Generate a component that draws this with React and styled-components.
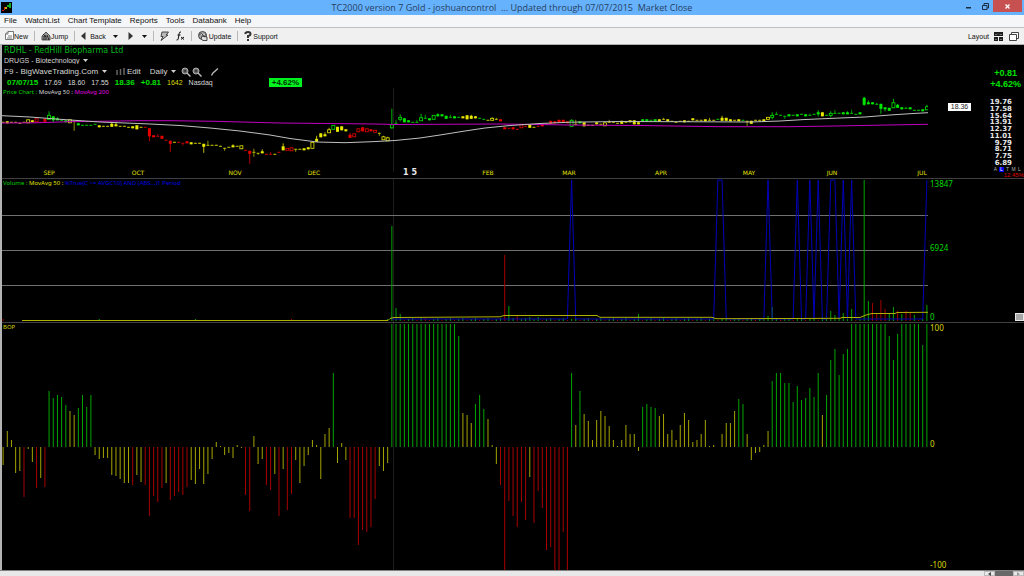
import React from "react";
import styled, { createGlobalStyle } from "styled-components";

const GlobalStyle = createGlobalStyle`
  * {
    box-sizing: border-box;
  }
  body {
    margin: 0;
    background-color: #000;
    font-family: "Liberation Sans", Arial, sans-serif;
    font-size: 8px;
  }
  button, select {
    font: inherit;
    color: inherit;
    margin: 0;
    padding: 0;
    border: 0 none;
    background-color: transparent;
    cursor: pointer;
  }
`;

const GREEN = "#00a400";
const YELLOW = "#a4a400";
const RED = "#a80000";

const Window = styled.div`
  height: 100vh;
  display: flex;
  flex-direction: column;
  overflow: hidden;
`;

const TitleBar = styled.header`
  height: 15px;
  display: grid;
  grid-template-columns: 64px 1fr 64px;
  background-color: #66b2fc;
`;

const AppIcon = styled.svg`
  width: 11px;
  height: 11px;
  margin: 2px 1px;
`;

const Title = styled.h1`
  margin: 0;
  font-family: "Open Sans", sans-serif;
  font-size: 9px;
  font-weight: 400;
  line-height: 15px;
  text-align: center;
  white-space: pre;
  color: #27405c;
`;

const WindowButtons = styled.div`
  display: flex;
  justify-content: flex-end;
  padding-right: 2px;
`;

const WindowButton = styled.button`
  width: ${props => (props.$close ? "29px" : "16px")};
  height: 12px;
  background-color: ${props => (props.$close ? "#c75050" : "transparent")};
  display: flex;
  align-items: center;
  justify-content: center;
`;

const MenuBar = styled.nav`
  height: 13px;
  display: flex;
  gap: 8px;
  padding-left: 4px;
  background-color: #f5f6f8;
  border-bottom: 1px solid #c0c0c0;
  line-height: 12px;
  color: #111;
`;

const MenuItem = styled.button`
  line-height: 12px;
`;

const ToolBar = styled.div`
  height: 17px;
  display: flex;
  align-items: center;
  padding: 0 5px;
  background-color: #f0f0f0;
  border-bottom: 1px solid #b0b0b0;
  font-size: 7px;
  color: #111;
`;

const Tool = styled.button`
  display: flex;
  align-items: center;
  height: 14px;
  gap: ${props => props.$gap || 0}px;
  margin-right: ${props => props.$after || 0}px;
`;

const Divider = styled.span`
  width: 1px;
  height: 10px;
  margin: 0 6px;
  background-color: #b8b8b8;
`;

const Spacer = styled.span`
  flex: 1;
`;

const Charts = styled.main`
  flex: 1;
  min-height: 0;
  display: grid;
  grid-template-rows: 43px 91fr 144fr 247fr;
  border-left: 2px solid #b4b4b4;
  background-color: #000;
`;

const Info = styled.section`
  display: flex;
  justify-content: space-between;
  color: #d8d8d8;
  white-space: nowrap;
`;

const InfoRow = styled.div`
  height: ${props => (props.$first ? 10 : 11)}px;
  display: flex;
  align-items: center;
  padding-left: 2px;
  gap: ${props => props.$gap || 0}px;
`;

const Company = styled.h2`
  margin: 0;
  font-size: 8px;
  font-weight: 400;
  font-family: "DejaVu Sans", sans-serif;
  color: #00b81c;
`;

const Picker = styled.label`
  display: flex;
  align-items: center;
  gap: 3px;
  font-size: ${props => props.$size || 8}px;
`;

const PickerSelect = styled.select`
  appearance: none;
`;

const ChartTools = styled.div`
  display: flex;
  gap: 1px;
  margin-left: -4px;
`;

const Value = styled.span`
  color: ${props => props.$color || "#d8d8d8"};
`;

const Quote = styled(InfoRow)`
  padding-left: 5px;
  gap: 6px;
  font-size: 7px;
`;

const Strong = styled.strong`
  font-size: 8px;
  color: #00e000;
`;

const PercentBadge = styled.span`
  margin-left: 50px;
  padding: 0 3px;
  height: 9px;
  line-height: 9px;
  font-size: 8px;
  font-weight: 700;
  background-color: #00f020;
  color: #003000;
`;

const Change = styled.div`
  padding: 23px 3px 0 0;
  font-size: 9px;
  font-weight: 700;
  line-height: 11px;
  text-align: center;
  color: #00e000;
`;

const Panel = styled.section`
  position: relative;
  min-height: 0;
  display: grid;
  grid-template-columns: 1fr 96px;
  border-bottom: ${props => (props.$last ? "0 none" : "1px solid #404040")};
`;

const Plot = styled.svg`
  display: block;
  width: 100%;
  height: 100%;
  min-height: 0;
`;

const PlotArea = styled.div`
  position: relative;
  min-height: 0;
  overflow: hidden;
`;

const Legend = styled.div`
  position: absolute;
  top: 0;
  left: 1px;
  font-family: "Noto Sans", sans-serif;
  font-size: 6px;
  line-height: 9px;
  white-space: pre;
`;

const Month = styled.span`
  position: absolute;
  bottom: 1px;
  transform: translateX(-50%);
  font-family: "DejaVu Sans", sans-serif;
  font-size: ${props => (props.$year ? 8 : 6)}px;
  font-weight: ${props => (props.$year ? 700 : 400)};
  line-height: 8px;
  white-space: pre;
  color: ${props => (props.$year ? "#e8e8e8" : "#e0e000")};
`;

const Axis = styled.div`
  position: relative;
  display: flex;
  flex-direction: column;
  justify-content: space-between;
  padding: 1px 0 1px 2px;
  font-family: "Noto Sans", sans-serif;
  font-size: 8px;
  line-height: 8px;
  color: ${props => props.$color};
`;

const MiddleLabel = styled.span`
  padding-bottom: 6px;
`;

const PriceAxis = styled(Axis)`
  justify-content: flex-start;
  padding: 11px 0 0;
`;

const PriceScale = styled.ol`
  height: 67px;
  margin: 0;
  padding: 0 12px 0 0;
  list-style: none;
  display: flex;
  flex-direction: column;
  justify-content: space-between;
  text-align: right;
  font-family: "DejaVu Sans", sans-serif;
  font-size: 7px;
  line-height: 6px;
  font-weight: 700;
  color: #e8e8e8;
`;

const LastPrice = styled.span`
  position: absolute;
  top: 15px;
  left: 20px;
  width: 23px;
  height: 8px;
  background-color: #fff;
  color: #222;
  font-family: "Liberation Sans", sans-serif;
  font-size: 7px;
  line-height: 8px;
  text-align: center;
`;

const ScaleModes = styled.div`
  display: flex;
  justify-content: flex-end;
  gap: 1px;
  padding: 1px 2px 0 0;
  font-family: "Liberation Sans", sans-serif;
  font-size: 5px;
  color: #b0b0b0;
`;

const Mode = styled.button`
  width: 5px;
  height: 5px;
  line-height: 5px;
  color: ${props => (props.$active ? "#fff" : "inherit")};
  background-color: ${props => (props.$active ? "#0000f0" : "transparent")};
`;

const Range = styled.div`
  line-height: 6px;
  font-family: "Liberation Sans", sans-serif;
  font-size: 6px;
  text-align: right;
  color: #e00000;
`;

const Handle = styled.button`
  position: absolute;
  right: 0;
  bottom: 1px;
  width: 9px;
  height: 8px;
  background-color: #a8a8a8;
  border: 1px solid #e8e8e8;
`;

const ScrollBar = styled.footer`
  height: 6px;
  display: flex;
  justify-content: flex-end;
  background-color: #e8e8e8;
  border-top: 1px solid #808080;
`;

const ScrollButton = styled.button`
  width: 11px;
  height: 5px;
  border: 1px solid #bbb;
  display: flex;
  align-items: center;
  justify-content: center;
`;

const Thumb = styled.span`
  width: 18px;
  background-color: #686868;
`;

const barX = i => 3.1 + i * 4.18;

const COLORS = { G: "#00e800", Y: "#e8e800", R: "#e80000" };

// BOP height in plot units for each day
const BOP = [
  -18, 16, 7, -26, -24, -50, -2, -15, -41, -31, -40, 56, 49, 52, 50, 42, 36, 32, 39, 52,
  40, 52, -8, -12, -11, -11, -28, -29, -32, -36, -36, -38, -28, -35, -38, -69, -49, -55, -41, -36,
  -53, -49, -45, -48, -40, -33, -37, -22, -37, -27, -12, 5, 1, -8, -6, -11, 2, -1, -48, -64,
  11, -17, -12, -38, -43, -27, -69, -22, -63, -47, -13, -36, -19, -8, 7, 2, -32, 13, 19, 74,
  -16, 4, -13, -71, -71, -98, -83, -85, -80, -52, -19, -24, -16, 123, 123, 123, 123, 123, 123, 123,
  123, 123, 123, 123, 123, 123, 123, 123, 123, 111, 34, 32, 24, 43, 52, 38, 28, 2, -17, -38,
  -123, -54, -69, -80, -55, -73, -30, -76, -44, -61, -103, -100, -123, -123, -85, -123, 74, 22, 56, 33,
  26, 7, 27, 36, 31, 21, 7, 1, 7, 22, 13, 13, -4, 40, 43, 40, 39, 31, 33, 13,
  17, 7, 22, 34, 27, 5, 7, 13, 27, 1, 2, 0, 13, 24, 24, 36, 48, 43, 13, -13,
  -6, -5, 2, 16, 66, 74, 74, 64, 64, 45, 61, 47, 49, 59, 50, 74, 32, 52, 87, 98,
  72, 93, 98, 123, 123, 123, 123, 123, 123, 123, 123, 123, 111, 87, 113, 123, 123, 123, 123, 123,
  102, 123
];

const bopColor = v => (v >= 38 ? GREEN : v <= -38 ? RED : YELLOW);

// [middle, body height, colour, wick above, wick below], lower case is a hollow body
const CANDLES = [
  [34, 1, "Y"], [34, 2, "Y"], [34, 1, "Y"], [34, 1, "Y"], [35, 1, "Y"], [34, 1, "Y"], [33, 3, "y"], [33, 2, "Y"],
  [32, 3, "r"], [34, 1, "R"], [32, 3, "R"], [29, 4, "g", 4], [30, 4, "G", 0, 2], [31, 2, "G", 1], [32, 1, "G"], [33, 2, "G"],
  [33, 3, "y"], [33, 1, "Y", 0, 9], [36, 2, "G"], [37, 1, "G"], [37, 1, "G"], [37, 1, "G"], [36, 1, "G"], [38, 2, "Y"],
  [38, 1, "Y"], [38, 1, "Y"], [37, 3, "Y", 2], [37, 2, "Y", 2], [38, 1, "Y"], [38, 1, "Y"], [39, 1, "Y"], [39, 2, "Y"],
  [39, 4, "Y"], [39, 1, "Y"], [39, 1, "R"], [44, 8, "R", 0, 5], [48, 2, "R"], [48, 1, "R", 2], [49, 3, "R"], [52, 1, "R"],
  [54, 3, "R", 0, 8], [54, 1, "Y"], [54, 1, "R"], [55, 1, "R", 0, 2], [54, 2, "R"], [55, 2, "Y"], [55, 1, "Y"], [55, 1, "Y"],
  [57, 3, "Y", 0, 6], [57, 1, "Y", 4], [57, 1, "Y"], [57, 1, "Y"], [58, 1, "Y"], [60, 1, "Y", 0, 2], [59, 1, "Y"], [58, 2, "Y", 1],
  [58, 1, "Y"], [59, 3, "y"], [62, 1, "R"], [64, 3, "R", 0, 10], [64, 1, "Y", 3, 4], [65, 1, "Y", 0, 1], [64, 2, "Y", 2], [66, 1, "R"],
  [66, 1, "R", 2], [66, 1, "Y"], [64, 1, "R"], [60, 4, "Y", 3], [61, 2, "r"], [61, 3, "r"], [61, 1, "Y", 0, 2], [61, 1, "Y"],
  [61, 2, "Y"], [60, 2, "Y"], [57, 6, "y"], [52, 3, "Y", 3], [47, 4, "Y"], [47, 2, "Y", 2], [43, 3, "y", 2], [39, 4, "g"],
  [41, 5, "Y"], [40, 4, "Y"], [42, 2, "Y"], [48, 3, "R", 2], [47, 3, "r"], [42, 3, "r"], [41, 4, "R"], [42, 3, "r"],
  [42, 2, "R"], [43, 2, "r"], [45, 1, "Y", 0, 2], [50, 3, "y", 1], [51, 3, "y", 1], [38, 3, "g", 16, 1], [35, 1, "G", 3], [30, 2, "g", 3, 2],
  [32, 4, "G"], [33, 2, "G"], [34, 1, "G"], [34, 1, "G", 2], [31, 3, "g", 4], [30, 1, "G", 3], [31, 2, "G"], [29, 4, "g"],
  [27, 2, "G", 1], [27, 2, "G"], [29, 3, "G"], [29, 1, "G", 2], [29, 2, "G"], [29, 1, "G"], [29, 2, "Y"], [29, 4, "Y"],
  [29, 3, "Y", 1], [29, 2, "Y"], [30, 1, "G"], [31, 1, "G"], [32, 1, "Y"], [31, 2, "y", 1], [31, 1, "Y", 1], [32, 2, "R"],
  [40, 2, "R"], [40, 1, "R"], [40, 2, "R"], [41, 1, "R"], [38, 3, "r"], [38, 1, "R"], [38, 3, "Y"], [39, 1, "Y"],
  [38, 1, "R"], [37, 2, "R"], [36, 1, "R"], [34, 3, "R"], [34, 2, "R"], [33, 3, "R"], [33, 3, "R"], [34, 2, "R"],
  [35, 6, "g", 1], [36, 1, "Y", 4], [34, 2, "G"], [36, 4, "Y"], [37, 1, "Y"], [37, 1, "Y"], [35, 2, "Y"], [36, 1, "Y"],
  [36, 3, "y"], [34, 1, "Y", 2], [34, 1, "Y"], [35, 1, "Y"], [34, 3, "Y"], [34, 1, "Y"], [33, 2, "Y"], [34, 4, "Y"],
  [35, 2, "Y"], [32, 2, "G"], [32, 2, "G"], [32, 1, "G"], [32, 2, "G"], [32, 2, "Y"], [31, 1, "Y", 1], [32, 2, "Y"],
  [33, 1, "Y"], [34, 1, "Y"], [33, 1, "Y"], [33, 2, "Y"], [33, 1, "Y"], [31, 2, "Y"], [32, 1, "Y"], [32, 1, "Y"],
  [32, 2, "Y"], [32, 1, "Y", 2], [32, 1, "Y"], [31, 1, "G"], [31, 3, "Y", 2], [31, 3, "Y"], [32, 2, "Y"], [32, 1, "Y"],
  [32, 2, "Y"], [32, 1, "G"], [33, 1, "Y", 0, 4], [34, 3, "Y"], [32, 1, "Y"], [32, 1, "Y"], [32, 2, "Y"], [30, 2, "y"],
  [28, 2, "g", 3, 2], [26, 1, "G", 2], [27, 1, "G"], [28, 1, "G", 0, 2], [27, 2, "G"], [27, 1, "G"], [27, 2, "G"], [26, 1, "G"],
  [27, 2, "G"], [27, 1, "G", 1], [26, 1, "G"], [25, 2, "G", 2, 2], [26, 4, "Y"], [27, 1, "G"], [26, 2, "g", 2, 2], [25, 1, "G", 3],
  [25, 1, "G"], [25, 2, "G"], [25, 2, "G", 1], [25, 1, "G", 3], [26, 1, "G"], [25, 2, "G"], [13, 7, "G", 1, 1], [15, 2, "G", 2],
  [15, 2, "G"], [16, 1, "G", 1], [18, 5, "G", 0, 5], [20, 2, "G", 0, 2], [21, 3, "G"], [17, 5, "g", 4], [18, 3, "G", 1], [20, 2, "G"],
  [20, 1, "G", 1], [20, 2, "G"], [22, 1, "G"], [22, 1, "G"], [22, 2, "G"], [20, 3, "g", 2]
];

const SIGNAL_DAYS = [136, 171, 172, 183, 190, 193, 195, 198, 199, 201, 203, 221];

// taller volume bars: day -> [height, colour]
const VOLUME = {
  93: [95, GREEN], 94: [13, GREEN], 95: [7, GREEN], 100: [4, GREEN], 101: [3, RED],
  120: [66, RED], 121: [15, GREEN], 123: [5, RED], 126: [4, GREEN], 128: [4, GREEN],
  152: [7, GREEN], 183: [5, GREEN], 184: [14, GREEN], 196: [4, GREEN], 198: [10, GREEN],
  199: [6, GREEN], 201: [8, GREEN], 203: [12, GREEN], 206: [141, GREEN], 207: [20, GREEN],
  208: [18, RED], 209: [8, RED], 210: [21, RED], 211: [12, RED], 212: [8, GREEN],
  213: [14, GREEN], 214: [10, RED], 215: [7, GREEN], 216: [10, RED], 217: [8, RED],
  218: [6, GREEN], 221: [16, GREEN]
};

const MONTHS = [
  ["SEP", 49], ["OCT", 138], ["NOV", 235], ["DEC", 314], ["1 5", 410], ["FEB", 488],
  ["MAR", 569], ["APR", 661], ["MAY", 749], ["JUN", 832], ["JUL", 922]
];

const PRICES = ["19.76", "17.58", "15.64", "13.91", "12.37", "11.01", "9.79", "8.71", "7.75", "6.89"];

const signalPoints = BOP.map((_, i) => i)
  .filter(i => i >= 93)
  .map(i => `${barX(i)},${SIGNAL_DAYS.includes(i) ? 180 : 319}`)
  .join(" ");

const Caret = ({ color = "#d0d0d0" }) => (
  <svg width="5" height="3" viewBox="0 0 5 3" aria-hidden="true">
    <path d="M0 0H5L2.5 3Z" fill={color} />
  </svg>
);

const YearLine = ({ from, to }) => (
  <line x1="393.5" x2="393.5" y1={from} y2={to} stroke="#1c1c1c" />
);

const Magnifier = () => (
  <svg width="10" height="10" viewBox="0 0 10 10" aria-hidden="true">
    <circle cx="4" cy="4" r="3" fill="#777" stroke="#aaa" />
    <path d="M6 6L9.5 9.5" stroke="#bbb" strokeWidth="1.4" />
    <path d="M2.5 4H5.5M4 2.5V5.5" stroke="#222" strokeWidth=".8" />
  </svg>
);

const Candle = ({ day, data: [mid, height, code, up = 0, down = 0] }) => {
  const x = barX(day);
  const y = 88 + mid + 0.3;
  const hollow = code !== code.toUpperCase();
  const color = COLORS[code.toUpperCase()];
  return (
    <g opacity={height === 1 ? 0.8 : 1}>
      <line x1={x} x2={x} y1={y - height / 2 - up} y2={y + height / 2 + down} stroke={color} strokeWidth=".8" />
      <rect
        x={x - 1.5}
        y={y - height / 2}
        width="3"
        height={height}
        fill={hollow ? "#000" : color}
        stroke={hollow ? color : "none"}
        strokeWidth=".8"
      />
    </g>
  );
};

const Header = () => (
  <>
    <TitleBar>
      <AppIcon viewBox="0 0 11 11" aria-hidden="true">
        <rect width="11" height="11" fill="#000" />
        <path d="M1 8H3V9H1ZM3 5H4V8H3Z" fill="#d02020" />
        <path d="M4 5H6V7H4Z" fill="#c8b000" />
        <path d="M6 3H8V5H6ZM8 1H10V6H8Z" fill="#10b020" />
      </AppIcon>
      <Title>{"TC2000 version 7 Gold - joshuancontrol  ... Updated through 07/07/2015  Market Close"}</Title>
      <WindowButtons>
        <WindowButton aria-label="Minimize">
          <svg width="6" height="6" viewBox="0 0 6 6"><path d="M0 4H5V5.5H0Z" fill="#1c2c3c" /></svg>
        </WindowButton>
        <WindowButton aria-label="Restore">
          <svg width="7" height="7" viewBox="0 0 7 7">
            <path d="M2 2V.5H6.5V5H5M.5 2.5H5V6.5H.5Z" fill="none" stroke="#1c2c3c" />
          </svg>
        </WindowButton>
        <WindowButton $close aria-label="Close">
          <svg width="5" height="5" viewBox="0 0 5 5"><path d="M.5 .5L4.5 4.5M4.5 .5L.5 4.5" stroke="#fff" strokeWidth="1.3" /></svg>
        </WindowButton>
      </WindowButtons>
    </TitleBar>
    <MenuBar>
      {["File", "WatchList", "Chart Template", "Reports", "Tools", "Databank", "Help"].map(item => (
        <MenuItem key={item}>{item}</MenuItem>
      ))}
    </MenuBar>
  </>
);

const Tools = () => (
  <ToolBar>
    <Tool>
      <svg width="9" height="10" viewBox="0 0 9 10" aria-hidden="true">
        <path d="M3 .5H8.5V8.5H.5V3ZM3 .5V3H.5M3 5H7M2 7H7" fill="#fff" stroke="#555" strokeWidth=".8" />
      </svg>
      New
    </Tool>
    <Divider />
    <Tool>
      <svg width="10" height="10" viewBox="0 0 10 10" aria-hidden="true">
        <path d="M1 5L5 1L9 5V9H1Z" fill="#999" stroke="#333" strokeWidth=".8" />
        <path d="M3 9V5H5V9M6 4L8 9M2 3L5 6" fill="none" stroke="#222" />
      </svg>
      Jump
    </Tool>
    <Divider />
    <Tool $gap={4} $after={7}>
      <svg width="5" height="8" viewBox="0 0 5 8" aria-hidden="true"><path d="M4.5 0V8L0 4Z" fill="#333" /></svg>
      Back
    </Tool>
    <Tool $after={10} aria-label="Back history"><Caret color="#111" /></Tool>
    <Tool $after={9} aria-label="Forward">
      <svg width="5" height="8" viewBox="0 0 5 8"><path d="M.5 0V8L5 4Z" fill="#333" /></svg>
    </Tool>
    <Tool aria-label="Forward history"><Caret color="#111" /></Tool>
    <Divider />
    <Tool $after={7} aria-label="Scan">
      <svg width="9" height="10" viewBox="0 0 9 10">
        <path d="M2 1H8.5L6 4H8L1 9.5L3 5.5H1Z" fill="#bbb" stroke="#333" strokeWidth=".9" />
      </svg>
    </Tool>
    <Tool aria-label="Formula">
      <svg width="9" height="10" viewBox="0 0 9 10">
        <path d="M5 1Q3.5 .5 3.2 2.5L2.2 8Q2 9.3 .5 9M1.5 4H4.5M5 6L8 8.5M8 6L5 8.5" fill="none" stroke="#111" />
      </svg>
    </Tool>
    <Divider />
    <Tool $gap={1}>
      <svg width="10" height="10" viewBox="0 0 10 10" aria-hidden="true">
        <circle cx="4.5" cy="4.5" r="4" fill="#aaa" stroke="#444" />
        <path d="M1 4Q4 1 5 4T8 3M3 8L4 5L9 6V9.5H5Z" fill="#ddd" stroke="#222" strokeWidth=".8" />
      </svg>
      Update
    </Tool>
    <Divider />
    <Tool $gap={1}>
      <svg width="8" height="10" viewBox="0 0 8 10" aria-hidden="true">
        <path d="M1.2 3Q1.5 1 4 1T6.5 3Q6.5 4.6 4 5V7" fill="none" stroke="#333" strokeWidth="2" />
        <rect x="3" y="8" width="2" height="2" fill="#333" />
      </svg>
      Support
    </Tool>
    <Spacer />
    <Tool $gap={5} $after={6}>
      Layout
      <svg width="9" height="9" viewBox="0 0 9 9" aria-hidden="true">
        <path d="M0 0H9V4H0ZM0 5H4V9H0ZM5 5H9V9H5Z" fill="#1c1c1c" />
        <path d="M1 2.5H3L4 1.5M5.5 2.5H8M1 7.5H3M6 7.5H8" stroke="#aaa" fill="none" strokeWidth=".6" />
      </svg>
    </Tool>
    <Tool aria-label="Windows">
      <svg width="10" height="9" viewBox="0 0 10 9">
        <path d="M2.5 2.5V.5H9.5V6.5H7.5M.5 2.5H7.5V8.5H.5Z" fill="#fff" stroke="#444" />
      </svg>
    </Tool>
  </ToolBar>
);

const InfoHeader = () => (
  <Info>
    <div>
      <InfoRow $first>
        <Company>RDHL - RedHill Biopharma Ltd</Company>
      </InfoRow>
      <InfoRow>
        <Picker $size={7}>
          <PickerSelect aria-label="Industry"><option>DRUGS - Biotechnology</option></PickerSelect>
          <Caret />
        </Picker>
      </InfoRow>
      <InfoRow $gap={9}>
        <Picker>
          <PickerSelect aria-label="Template"><option>F9 - BigWaveTrading.Com</option></PickerSelect>
          <Caret />
        </Picker>
        <Tool $gap={2}>
          <svg width="9" height="8" viewBox="0 0 9 8" aria-hidden="true">
            <path d="M1 2V7M4.5 1V7M8 0V7" stroke="#666" strokeWidth="1.5" />
          </svg>
          Edit
        </Tool>
        <Picker>
          <PickerSelect aria-label="Time frame"><option>Daily</option></PickerSelect>
          <Caret />
        </Picker>
        <ChartTools>
          <Tool aria-label="Zoom in"><Magnifier /></Tool>
          <Tool $after={8} aria-label="Zoom out"><Magnifier /></Tool>
          <Tool aria-label="Draw">
            <svg width="8" height="8" viewBox="0 0 8 8"><path d="M.5 7.5L2 5L7 .5" fill="none" stroke="#bbb" strokeWidth="1.3" /></svg>
          </Tool>
        </ChartTools>
      </InfoRow>
      <Quote>
        <Strong>07/07/15</Strong>
        <Value>17.69</Value>
        <Value>18.60</Value>
        <Value>17.55</Value>
        <Strong>18.36</Strong>
        <Strong>+0.81</Strong>
        <Value $color="#d8d800">1642</Value>
        <Value>Nasdaq</Value>
        <PercentBadge>+4.62%</PercentBadge>
      </Quote>
    </div>
    <Change>
      <div>+0.81</div>
      <div>+4.62%</div>
    </Change>
  </Info>
);

const PricePanel = () => (
  <Panel>
    <PlotArea>
      <Plot viewBox="2 88 926 90" preserveAspectRatio="none">
        <YearLine from={88} to={172} />
        {CANDLES.map((data, i) => <Candle key={i} day={i} data={data} />)}
        <polyline
          points="2,123 35,122.8 70,121.7 140,120.7 170,120.7 215,121.3 280,123 376,124 395,124.5 500,124 570,125 640,125.5 720,126.7 790,126.7 835,126 905,124.7 928,124.3"
          fill="none"
          stroke="#c000c0"
        />
        <polyline
          points="2,115.7 30,117 60,119.3 100,122 150,124 180,125.5 210,128 240,131 270,135 290,138.5 317,142 345,142.7 372,141.7 395,140.5 420,138 440,135 465,131 485,128 510,125.5 540,123.5 570,122.2 620,121.5 700,121.8 750,122 780,121 805,119.5 840,118 865,117 890,115 910,113.7 928,112.7"
          fill="none"
          stroke="#c0c0c0"
        />
      </Plot>
      <Legend>
        <Value $color="#00d000">Price Chart : </Value>
        <Value>MovAvg 50 : </Value>
        <Value $color="#e000e0">MovAvg 200</Value>
      </Legend>
      {MONTHS.map(([name, x]) => (
        <Month key={name} $year={name === "1 5"} style={{ left: `${((x - 2) / 926) * 100}%` }}>
          {name}
        </Month>
      ))}
    </PlotArea>
    <PriceAxis>
      <PriceScale>
        {PRICES.map(price => <li key={price}>{price}</li>)}
      </PriceScale>
      <ScaleModes>
        <Mode>A</Mode>
        <Mode $active>L</Mode>
        <Mode>T</Mode>
        <Mode>M</Mode>
        <Mode>L</Mode>
      </ScaleModes>
      <Range>12.45%</Range>
      <LastPrice>18.36</LastPrice>
    </PriceAxis>
  </Panel>
);

const VolumePanel = () => (
  <Panel>
    <PlotArea>
      <Plot viewBox="2 179 926 143" preserveAspectRatio="none">
        <YearLine from={179} to={322} />
        {[215.5, 250.5, 285.5].map(y => (
          <line key={y} x1="2" x2="928" y1={y} y2={y} stroke="#707070" />
        ))}
        {BOP.map((_, i) => {
          const small = [i > 92 ? 1 + ((i * 7) % 3) : (i * 5) % 23 === 0 ? 2 : 0, i % 3 ? GREEN : RED];
          const [height, color] = VOLUME[i] || small;
          return <rect key={i} x={barX(i) - 0.5} y={321 - height} width="1" height={height} fill={color} />;
        })}
        <polyline points={signalPoints} fill="none" stroke="#0000b8" />
        <polyline
          points="22,320.5 388,320.5 390,318.5 394,317.5 500,316.8 504,315.5 597,315.5 600,317.3 712,317.3 716,318.7 794,318.5 840,318.3 842,317.5 860,317.5 866,315 872,313.5 895,313.5 897,312.5 928,312.3"
          fill="none"
          stroke="#b0b000"
        />
      </Plot>
      <Legend>
        <Value $color="#00d000">Volume : </Value>
        <Value $color="#e0e000">MovAvg 50 : </Value>
        <Value $color="#0000e0">{"%True(C >= AVGC10) AND (ABS...)1 Period"}</Value>
      </Legend>
    </PlotArea>
    <Axis $color="#00d800">
      <span>13847</span>
      <MiddleLabel>6924</MiddleLabel>
      <span>0</span>
      <Handle aria-label="Resize" />
    </Axis>
  </Panel>
);

const BopPanel = () => (
  <Panel $last>
    <PlotArea>
      <Plot viewBox="2 323 926 247" preserveAspectRatio="none">
        <YearLine from={323} to={570} />
        {BOP.map((v, i) => (
          <rect
            key={i}
            x={barX(i) - 0.5}
            y={v > 0 ? 447 - v : 447}
            width="1"
            height={Math.abs(v)}
            fill={bopColor(v)}
          />
        ))}
      </Plot>
      <Legend><Value $color="#d0d000">BOP</Value></Legend>
    </PlotArea>
    <Axis $color="#d8d800">
      <span>100</span>
      <MiddleLabel>0</MiddleLabel>
      <span>-100</span>
    </Axis>
  </Panel>
);

const App = () => (
  <Window>
    <GlobalStyle />
    <Header />
    <Tools />
    <Charts>
      <InfoHeader />
      <PricePanel />
      <VolumePanel />
      <BopPanel />
    </Charts>
    <ScrollBar>
      <ScrollButton aria-label="Scroll left">
        <svg width="3" height="4" viewBox="0 0 3 4"><path d="M3 0V4L0 2Z" fill="#444" /></svg>
      </ScrollButton>
      <Thumb />
      <ScrollButton aria-label="Scroll right">
        <svg width="3" height="4" viewBox="0 0 3 4"><path d="M0 0V4L3 2Z" fill="#999" /></svg>
      </ScrollButton>
    </ScrollBar>
  </Window>
);

export default App;
